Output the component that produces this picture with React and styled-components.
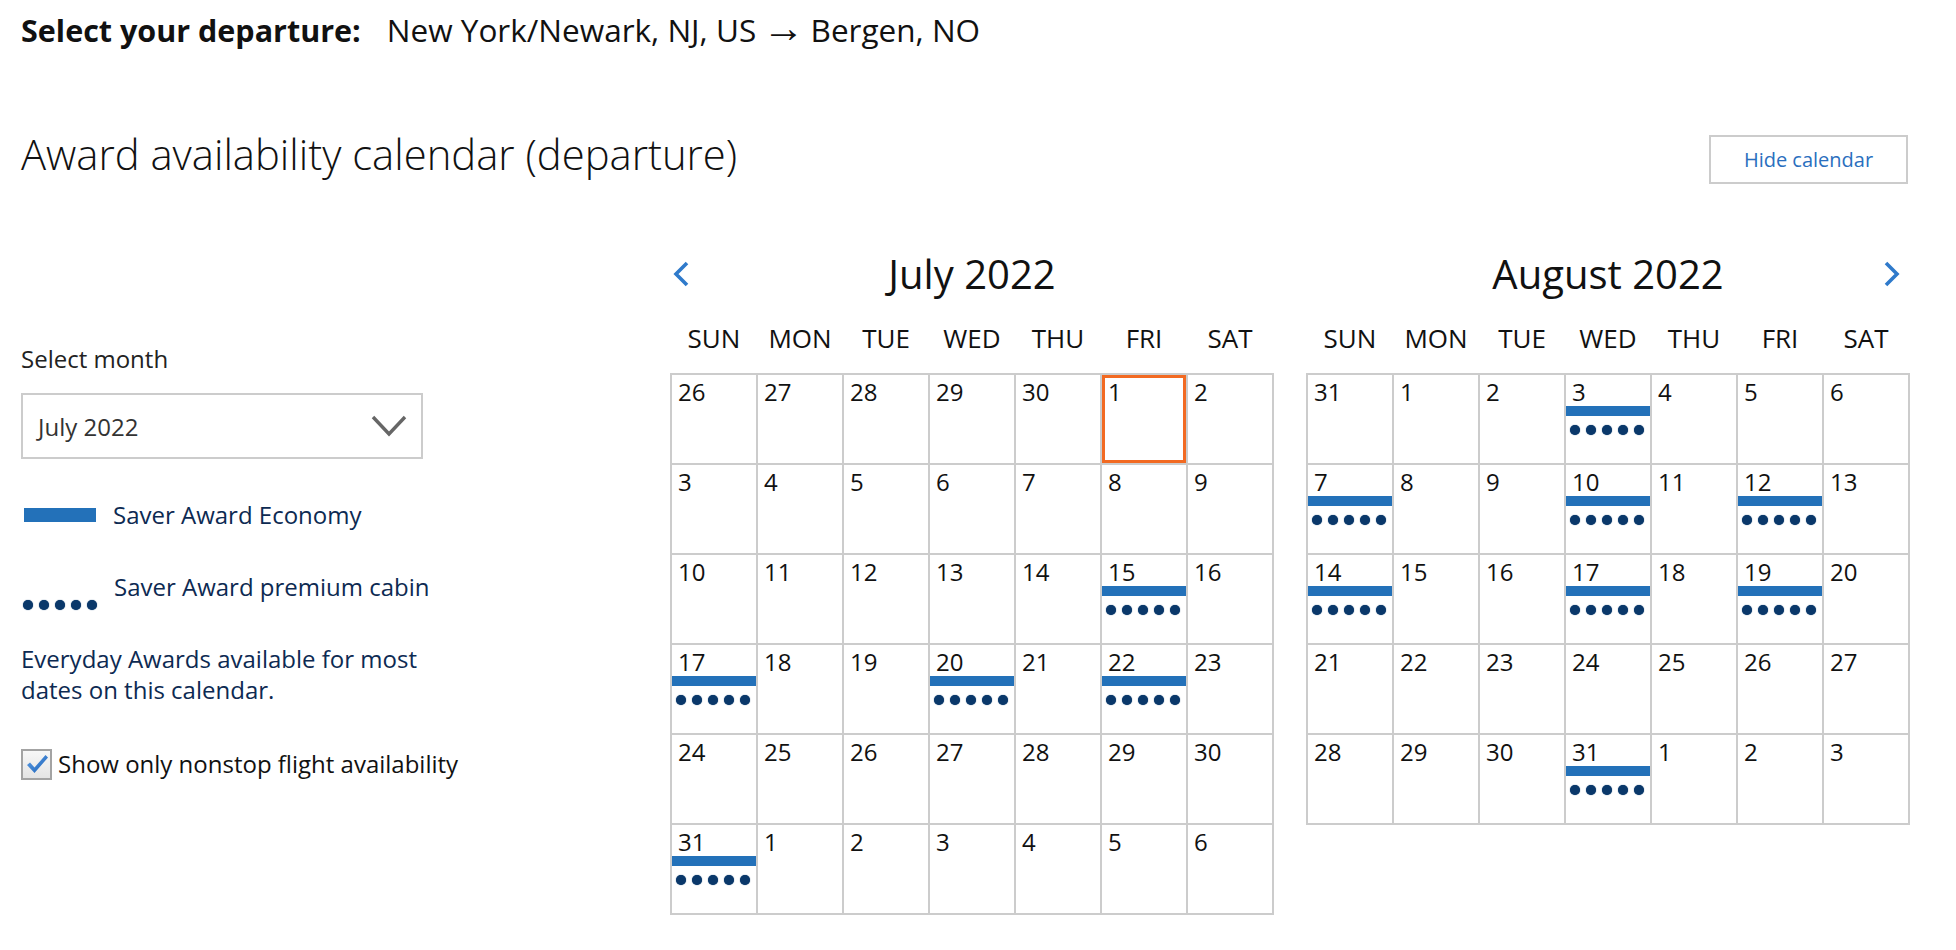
import React from "react";
import styled, { createGlobalStyle, css } from "styled-components";

const GlobalStyle = createGlobalStyle`
  html, body {
    margin: 0;
    padding: 0;
    background: #ffffff;
  }
  body {
    font-family: "Open Sans", "Liberation Sans", sans-serif;
    color: #1a1a1a;
  }
`;

// availability for each month: days with saver economy + premium
const july = {
  title: "July 2022",
  weeks: [
    [26, 27, 28, 29, 30, 1, 2],
    [3, 4, 5, 6, 7, 8, 9],
    [10, 11, 12, 13, 14, 15, 16],
    [17, 18, 19, 20, 21, 22, 23],
    [24, 25, 26, 27, 28, 29, 30],
    [31, 1, 2, 3, 4, 5, 6],
  ],
  avail: ["2-5", "3-0", "3-3", "3-5", "5-0"],
  selected: "0-5",
};

const august = {
  title: "August 2022",
  weeks: [
    [31, 1, 2, 3, 4, 5, 6],
    [7, 8, 9, 10, 11, 12, 13],
    [14, 15, 16, 17, 18, 19, 20],
    [21, 22, 23, 24, 25, 26, 27],
    [28, 29, 30, 31, 1, 2, 3],
  ],
  avail: ["0-3", "1-0", "1-3", "1-5", "2-0", "2-3", "2-5", "4-3"],
  selected: null,
};

const weekdays = ["SUN", "MON", "TUE", "WED", "THU", "FRI", "SAT"];

const Chevron = ({ dir }) => (
  <svg width="18" height="26" viewBox="0 0 18 26">
    <polyline
      points={dir === "left" ? "15,2 4,13 15,24" : "3,2 14,13 3,24"}
      fill="none"
      stroke="#2f7acb"
      strokeWidth="3.6"
    />
  </svg>
);

const Dots = () => (
  <DotRow>
    {[0, 1, 2, 3, 4].map((i) => (
      <Dot key={i} />
    ))}
  </DotRow>
);

const MonthView = ({ data, arrow }) => (
  <Month>
    <MonthHead>
      <ArrowSlot $side="left">{arrow === "left" && <Chevron dir="left" />}</ArrowSlot>
      <MonthTitle>{data.title}</MonthTitle>
      <ArrowSlot $side="right">{arrow === "right" && <Chevron dir="right" />}</ArrowSlot>
    </MonthHead>
    <Weekdays>
      {weekdays.map((d) => (
        <Weekday key={d}>{d}</Weekday>
      ))}
    </Weekdays>
    <Grid>
      {data.weeks.map((week, w) =>
        week.map((day, d) => {
          const key = `${w}-${d}`;
          const has = data.avail.includes(key);
          return (
            <Cell key={key} $selected={data.selected === key}>
              <DayNum>{day}</DayNum>
              {has && (
                <>
                  <EconomyBar />
                  <Dots />
                </>
              )}
            </Cell>
          );
        })
      )}
    </Grid>
  </Month>
);

const App = () => {
  return (
    <>
      <GlobalStyle />
      <Page>
        <Header>
          <HeaderLabel>Select your departure:</HeaderLabel>
          <Route>
            New York/Newark, NJ, US <RouteArrow>→</RouteArrow> Bergen, NO
          </Route>
        </Header>

        <TitleRow>
          <Title>Award availability calendar (departure)</Title>
          <HideButton>Hide calendar</HideButton>
        </TitleRow>

        <Main>
          <Sidebar>
            <FieldLabel>Select month</FieldLabel>
            <SelectBox>
              <span>July 2022</span>
              <svg width="36" height="24" viewBox="0 0 36 24">
                <polyline points="2,3 18,20 34,3" fill="none" stroke="#666" strokeWidth="3.4" />
              </svg>
            </SelectBox>

            <LegendRow>
              <LegendBar />
              <LegendText>Saver Award Economy</LegendText>
            </LegendRow>
            <LegendRow $premium>
              <Dots />
              <LegendText>Saver Award premium cabin</LegendText>
            </LegendRow>

            <Note>Everyday Awards available for most dates on this calendar.</Note>

            <CheckRow>
              <CheckBox>
                <svg width="24" height="22" viewBox="0 0 24 22">
                  <defs>
                    <linearGradient id="chk" x1="0" y1="0" x2="1" y2="1">
                      <stop offset="0" stopColor="#5d9ee6" />
                      <stop offset="1" stopColor="#1c62b8" />
                    </linearGradient>
                  </defs>
                  <path
                    d="M2 12 L5 9.5 L9.5 14.5 L20.5 2 L23 4.5 L9.5 20 Z"
                    fill="url(#chk)"
                  />
                </svg>
              </CheckBox>
              <CheckLabel>Show only nonstop flight availability</CheckLabel>
            </CheckRow>
          </Sidebar>

          <Calendars>
            <MonthView data={july} arrow="left" />
            <MonthView data={august} arrow="right" />
          </Calendars>
        </Main>
      </Page>
    </>
  );
};

export default App;

const Page = styled.div`
  padding: 10px 46px 40px 21px;
`;

const Header = styled.div`
  display: flex;
  align-items: baseline;
  height: 40px;
  font-size: 30.5px;
  line-height: 40px;
  color: #111;
`;

const HeaderLabel = styled.span`
  font-weight: 700;
`;

const Route = styled.span`
  margin-left: 26px;
  font-size: 31.5px;
  font-weight: 400;
  white-space: nowrap;
`;

const RouteArrow = styled.span`
  font-family: "Liberation Sans", sans-serif;
  font-size: 42px;
  line-height: 30px;
  margin: 0 -2px;
`;

const TitleRow = styled.div`
  display: flex;
  align-items: flex-start;
  justify-content: space-between;
  margin-top: 80px;
`;

const Title = styled.h1`
  margin: 0;
  font-size: 41.8px;
  line-height: 48px;
  font-weight: 300;
  color: #111;
`;

const HideButton = styled.button`
  width: 199px;
  height: 49px;
  margin: 5px 2px 0 0;
  border: 2px solid #cccccc;
  background: #fff;
  color: #2a6fbe;
  font-family: inherit;
  font-size: 20px;
  cursor: pointer;
`;

const Main = styled.div`
  display: flex;
  justify-content: space-between;
  align-items: flex-start;
  margin-top: 66px;
`;

const Sidebar = styled.div`
  width: 420px;
  padding-top: 93px;
`;

const FieldLabel = styled.div`
  font-size: 24px;
  line-height: 32px;
  color: #222;
`;

const SelectBox = styled.div`
  box-sizing: border-box;
  width: 402px;
  height: 66px;
  margin-top: 18px;
  border: 2px solid #cccccc;
  display: flex;
  align-items: center;
  justify-content: space-between;
  padding: 0 14px 0 15px;
  font-size: 24px;
  color: #333;
`;

const DotRow = styled.div`
  display: flex;
  gap: 6px;
  padding: 9px 0 0 4px;
`;

const LegendRow = styled.div`
  display: flex;
  align-items: ${(p) => (p.$premium ? "flex-start" : "center")};
  gap: 17px;
  margin-top: 40px;
  ${(p) =>
    p.$premium &&
    css`
      & > ${DotRow} {
        margin-top: 29px;
        margin-left: 2px;
        padding: 0;
      }
    `}
`;

const LegendBar = styled.span`
  display: block;
  width: 72px;
  height: 14px;
  margin-left: 3px;
  background: #2371b9;
`;

const LegendText = styled.span`
  font-size: 24px;
  line-height: 32px;
  color: #0d2a52;
`;

const Note = styled.p`
  margin: 33px 0 0;
  font-size: 24px;
  line-height: 31px;
  color: #0d2a52;
`;

const CheckRow = styled.label`
  display: flex;
  align-items: center;
  gap: 6px;
  margin-top: 43px;
  white-space: nowrap;
`;

const CheckBox = styled.span`
  box-sizing: border-box;
  flex: none;
  width: 31px;
  height: 31px;
  border: 2px solid #a3a3a3;
  background: linear-gradient(#f7f7f7, #e4e4e4);
  display: flex;
  align-items: center;
  justify-content: center;
`;

const CheckLabel = styled.span`
  font-size: 24px;
  line-height: 32px;
  color: #111;
`;

const Calendars = styled.div`
  display: flex;
  gap: 32px;
`;

const Month = styled.div`
  width: 604px;
`;

const MonthHead = styled.div`
  display: grid;
  grid-template-columns: 40px 1fr 40px;
  align-items: center;
`;

const ArrowSlot = styled.div`
  display: flex;
  justify-content: ${(p) => (p.$side === "left" ? "flex-start" : "flex-end")};
  padding: ${(p) => (p.$side === "left" ? "0 0 0 2px" : "0 9px 0 0")};
  height: 26px;
`;

const MonthTitle = styled.h2`
  margin: 0;
  text-align: center;
  font-size: 40px;
  line-height: 48px;
  font-weight: 400;
  color: #111;
`;

const Weekdays = styled.div`
  display: grid;
  grid-template-columns: repeat(7, 84px);
  column-gap: 2px;
  padding: 0 2px;
  margin-top: 24px;
`;

const Weekday = styled.div`
  text-align: center;
  font-size: 26px;
  line-height: 32px;
  color: #111;
`;

const Grid = styled.div`
  display: grid;
  grid-template-columns: repeat(7, 84px);
  grid-auto-rows: 88px;
  gap: 2px;
  padding: 2px;
  margin-top: 19px;
  background: #cccccc;
`;

const Cell = styled.div`
  background: #fff;
  ${(p) =>
    p.$selected &&
    css`
      box-shadow: inset 0 0 0 3px #f26a22;
    `}
`;

const DayNum = styled.div`
  padding: 3px 0 0 6px;
  font-size: 24px;
  line-height: 28px;
  color: #111;
`;

const EconomyBar = styled.div`
  height: 10px;
  background: #2371b9;
`;

const Dot = styled.span`
  width: 10px;
  height: 10px;
  border-radius: 50%;
  background: #0a386a;
  box-shadow: 0 0 1px #0a386a;
`;
